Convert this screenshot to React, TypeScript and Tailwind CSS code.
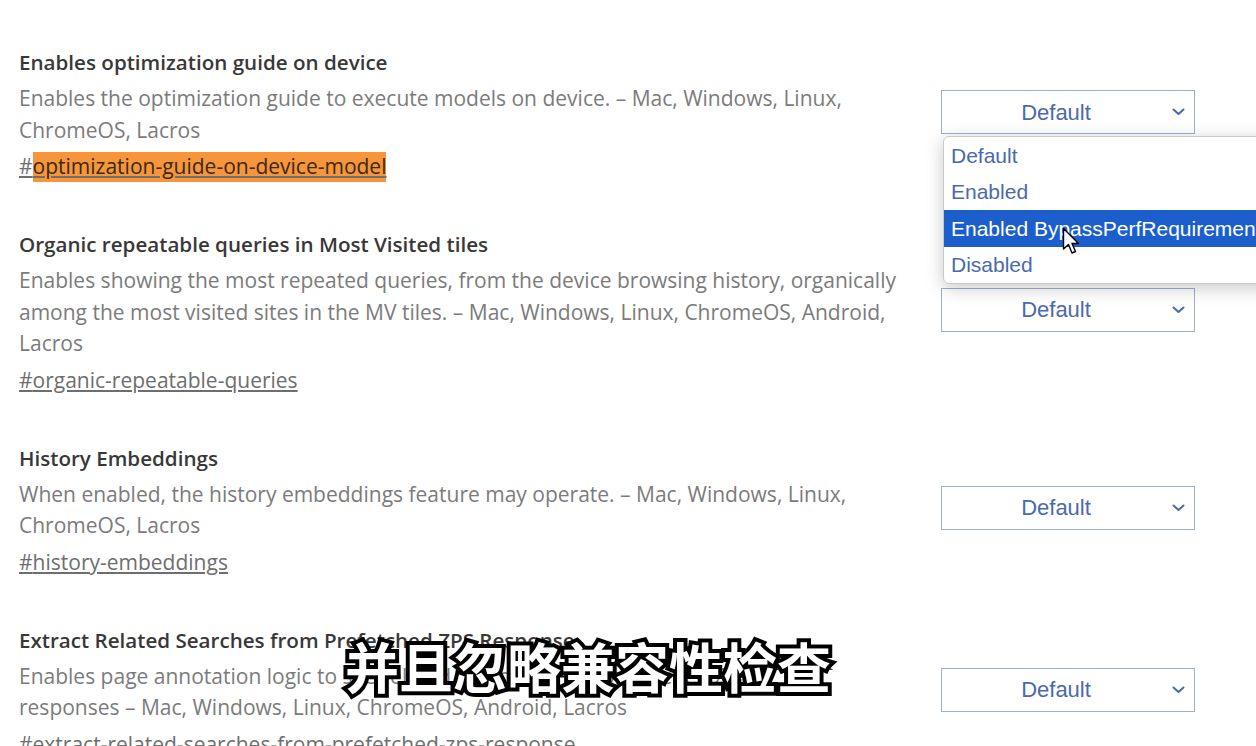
import React from "react";

type Flag = {
  title: string;
  lines: string[];
  tag: string;
  highlight?: boolean;
};

const flags: Flag[] = [
  {
    title: "Enables optimization guide on device",
    lines: [
      "Enables the optimization guide to execute models on device. – Mac, Windows, Linux,",
      "ChromeOS, Lacros",
    ],
    tag: "optimization-guide-on-device-model",
    highlight: true,
  },
  {
    title: "Organic repeatable queries in Most Visited tiles",
    lines: [
      "Enables showing the most repeated queries, from the device browsing history, organically",
      "among the most visited sites in the MV tiles. – Mac, Windows, Linux, ChromeOS, Android,",
      "Lacros",
    ],
    tag: "organic-repeatable-queries",
  },
  {
    title: "History Embeddings",
    lines: [
      "When enabled, the history embeddings feature may operate. – Mac, Windows, Linux,",
      "ChromeOS, Lacros",
    ],
    tag: "history-embeddings",
  },
  {
    title: "Extract Related Searches from Prefetched ZPS Response",
    lines: [
      "Enables page annotation logic to see related searches from prefetched ZPS",
      "responses – Mac, Windows, Linux, ChromeOS, Android, Lacros",
    ],
    tag: "extract-related-searches-from-prefetched-zps-response",
  },
];

const Chevron = () => (
  <svg width="13" height="8" viewBox="0 0 13 8" fill="none">
    <path d="M1.5 1.5 L6.5 6 L11.5 1.5" stroke="#4a6aad" strokeWidth="2" strokeLinecap="round" strokeLinejoin="round" />
  </svg>
);

const SelectBox: React.FC = () => (
  <div className="relative mb-[5px] w-[254px] h-[44px] border border-[#9fb0cf] bg-white flex items-center justify-center pr-[24px] font-['Liberation_Sans',Arial,sans-serif] text-[22px] text-[#4a6aad]">
    <span>Default</span>
    <span className="absolute right-[9px] top-[17px]">
      <Chevron />
    </span>
  </div>
);

const Popup: React.FC = () => {
  const items = ["Default", "Enabled", "Enabled BypassPerfRequirement", "Disabled"];
  return (
    <div className="absolute left-[943px] top-[136px] w-[340px] bg-white border border-[#c9c9c9] rounded-[6px] shadow-[0_4px_18px_rgba(0,0,0,0.22)] overflow-hidden font-['Liberation_Sans',Arial,sans-serif] text-[21px]">
      {items.map((it, i) => (
        <div
          key={it}
          className={
            i === 2
              ? "h-[36.5px] flex items-center pl-[7px] whitespace-nowrap bg-[#1c5fcc] text-white"
              : "h-[36.5px] flex items-center pl-[7px] whitespace-nowrap text-[#4a6aad]"
          }
        >
          {it}
        </div>
      ))}
    </div>
  );
};

const Cursor = () => (
  <svg className="absolute left-[1062px] top-[227px]" width="20" height="30" viewBox="0 0 20 30">
    <path
      d="M1.5 1.5 L1.5 22 L6.5 17.5 L10 26 L13.5 24.5 L10 16.5 L16.5 16.5 Z"
      fill="white"
      stroke="black"
      strokeWidth="1.4"
      strokeLinejoin="round"
    />
  </svg>
);

export default function App() {
  return (
    <div className="relative w-[1256px] h-[746px] overflow-hidden bg-white font-['Open_Sans','Noto_Sans',sans-serif]">
      <div className="pt-[47px] pl-[19px] flex flex-col gap-[47px]">
        {flags.map((f) => (
          <div key={f.tag} className="flex flex-col">
            <div className="text-[20.6px] leading-[30px] font-semibold text-[#383838] whitespace-nowrap">
              {f.title}
            </div>
            <div className="mt-[6px] flex items-center">
              <div className="w-[922px] text-[21px] leading-[31.5px] text-[#7b7b7b]">
                {f.lines.map((l) => (
                  <div key={l} className="whitespace-nowrap">
                    {l}
                  </div>
                ))}
              </div>
              <SelectBox />
            </div>
            <div className="mt-[4px] text-[21px] leading-[32px] text-[#6e6e6e] whitespace-nowrap">
              {f.highlight ? (
                <span className="underline">
                  #<span className="bg-[#f7953a] text-[#3a2a1a] pb-[2px]">{f.tag}</span>
                </span>
              ) : (
                <span className="underline">#{f.tag}</span>
              )}
            </div>
          </div>
        ))}
      </div>

      <Popup />
      <Cursor />

      <div className="absolute left-[345px] top-[631px] text-[54px] leading-[70px] font-bold text-white whitespace-nowrap font-['Noto_Sans_CJK_SC',sans-serif] [-webkit-text-stroke:8px_black] [paint-order:stroke_fill]">
        并且忽略兼容性检查
      </div>
    </div>
  );
}
